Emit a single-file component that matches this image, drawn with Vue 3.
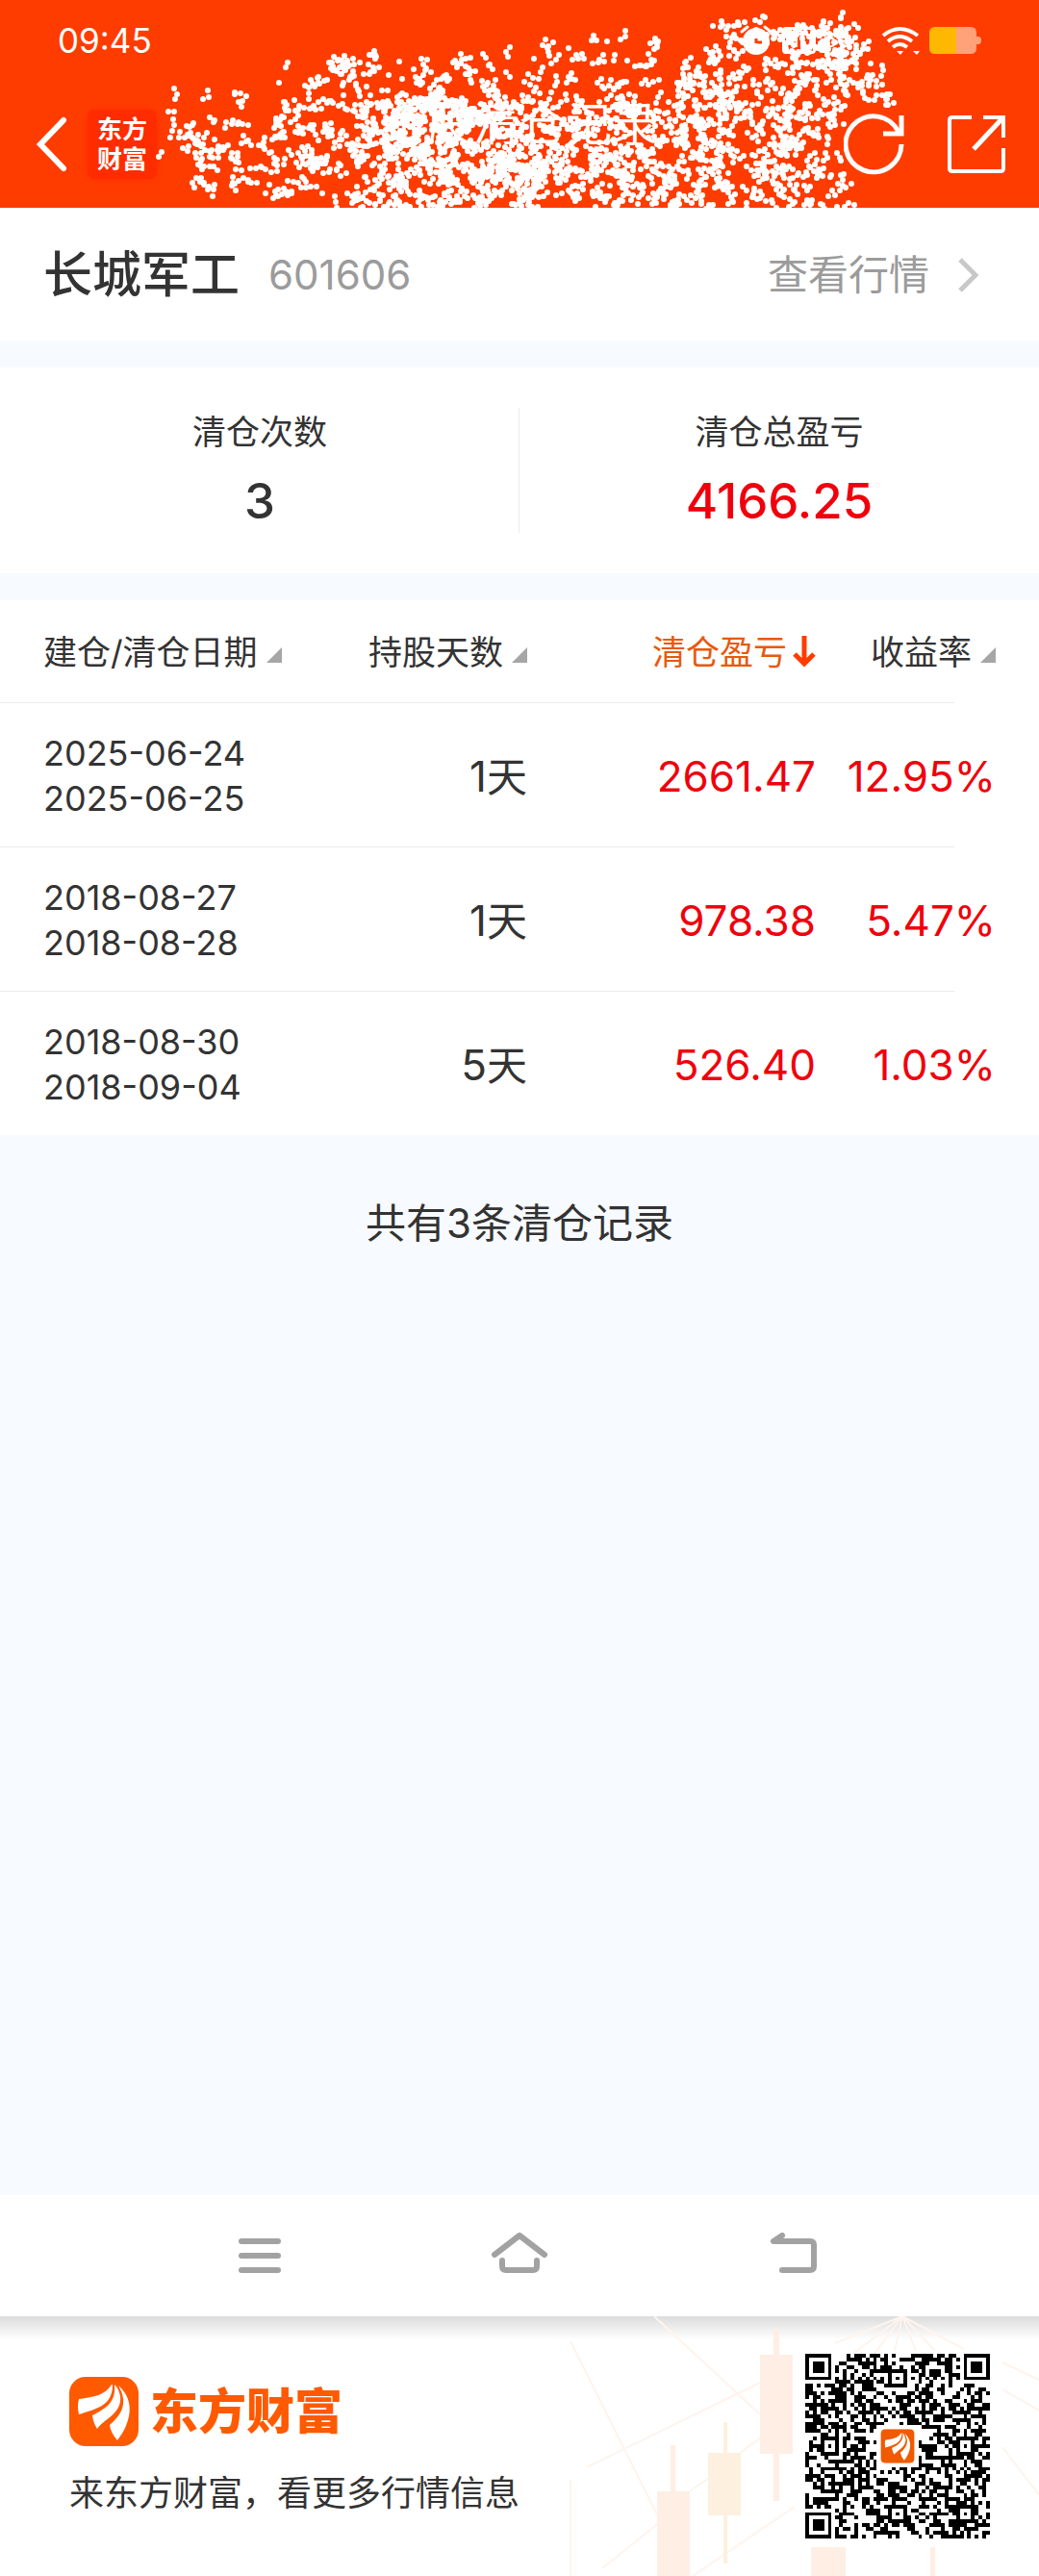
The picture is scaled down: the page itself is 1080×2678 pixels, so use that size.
<script setup>
import { ref, computed } from 'vue'

const stock = { name: '长城军工', code: '601606' }

const columns = [
  { key: 'date', label: '建仓/清仓日期' },
  { key: 'days', label: '持股天数' },
  { key: 'profit', label: '清仓盈亏' },
  { key: 'rate', label: '收益率' }
]

const records = [
  { open: '2025-06-24', close: '2025-06-25', days: 1, profit: '2661.47', rate: '12.95' },
  { open: '2018-08-27', close: '2018-08-28', days: 1, profit: '978.38', rate: '5.47' },
  { open: '2018-08-30', close: '2018-09-04', days: 5, profit: '526.40', rate: '1.03' }
]

const sortKey = ref('profit')

const sortedRecords = computed(() => {
  const value = (r) => sortKey.value === 'date' ? Date.parse(r.close) : Number(r[sortKey.value])
  return [...records].sort((a, b) => value(b) - value(a))
})

function createRandom(seed) {
  let s = seed
  return () => {
    s = (s * 1664525 + 1013904223) % 4294967296
    return s / 4294967296
  }
}

// spray over the title: [left, top, right, bottom, dots]
const sprayAreas = [
  [165, 90, 225, 190, 36],
  [190, 138, 290, 205, 105],
  [225, 95, 290, 140, 18],
  [290, 70, 380, 205, 165],
  [310, 120, 350, 180, 30],
  [340, 55, 540, 110, 160],
  [370, 105, 475, 216, 380],
  [400, 105, 470, 165, 150],
  [475, 105, 545, 216, 300],
  [500, 165, 560, 200, 60],
  [540, 100, 700, 216, 520],
  [545, 40, 700, 100, 90],
  [700, 60, 880, 130, 300],
  [690, 110, 865, 216, 430],
  [735, 16, 885, 60, 90],
  [815, 28, 845, 56, 50],
  [850, 28, 900, 58, 45],
  [870, 50, 925, 110, 60],
  [865, 115, 885, 216, 18]
]

function buildSpray() {
  const random = createRandom(77)
  let d = ''
  for (const [x0, y0, x1, y1, count] of sprayAreas) {
    let left = count
    while (left > 0) {
      let x = x0 + random() * (x1 - x0)
      let y = y0 + random() * (y1 - y0)
      let run = 1 + Math.floor(random() * 3)
      while (run-- > 0 && left-- > 0) {
        d += `M${Math.round(x)} ${Math.round(y)}h0`
        const angle = random() * Math.PI * 2
        x += Math.cos(angle) * 6
        y += Math.sin(angle) * 6
      }
    }
  }
  return d
}

const sprayPath = buildSpray()

const qrSize = 49

function buildQr() {
  const random = createRandom(2025)
  const grid = Array.from({ length: qrSize }, () =>
    Array.from({ length: qrSize }, () => random() < 0.51)
  )
  const last = qrSize - 7

  // timing rows
  for (let i = 8; i < qrSize - 8; i++) {
    grid[6][i] = i % 2 === 0
    grid[i][6] = i % 2 === 0
  }
  // finder marks with their quiet border
  for (const [cx, cy] of [[3, 3], [last + 3, 3], [3, last + 3]]) {
    for (let y = cy - 4; y <= cy + 4; y++) {
      for (let x = cx - 4; x <= cx + 4; x++) {
        if (x < 0 || y < 0 || x >= qrSize || y >= qrSize) continue
        const ring = Math.max(Math.abs(x - cx), Math.abs(y - cy))
        grid[y][x] = ring !== 4 && ring !== 2
      }
    }
  }
  // alignment marks
  for (const [cx, cy] of [[24, 6], [6, 24], [42, 24], [24, 42], [42, 42]]) {
    for (let y = cy - 2; y <= cy + 2; y++) {
      for (let x = cx - 2; x <= cx + 2; x++) {
        grid[y][x] = Math.max(Math.abs(x - cx), Math.abs(y - cy)) !== 1
      }
    }
  }
  // room for the logo
  for (let y = 19; y < 30; y++) {
    for (let x = 19; x < 30; x++) grid[y][x] = false
  }

  let d = ''
  grid.forEach((row, y) => row.forEach((on, x) => {
    if (on) d += `M${x} ${y}h1v1h-1z`
  }))
  return d
}

const qrPath = buildQr()
</script>

<template>
  <div class="page">
    <header class="header">
      <div class="status-bar">
        <span class="time">09:45</span>
        <div class="status-icons">
          <svg width="34" height="34" viewBox="0 0 34 34" fill="none">
            <circle cx="17" cy="18" r="14" fill="#fff" />
            <path d="M17 10v9h6" stroke="#ff3c00" stroke-width="3" />
            <path d="M2 8l6-5M32 8l-6-5" stroke="#fff" stroke-width="3" stroke-linecap="round" />
          </svg>
          <span class="badge">HD</span>
          <span class="network">5G</span>
          <svg width="40" height="30" viewBox="0 0 40 30" fill="none" stroke="#fff" stroke-width="4">
            <path d="M2 10Q19-4 38 10M7 16Q19 6 32 16M12 22q7-6 15 0" />
            <path d="M16 26h7l-3 4zM33 26h7l-3 4z" fill="#fff" stroke="none" />
          </svg>
          <svg width="54" height="28" viewBox="0 0 54 28">
            <path d="M28 0h15q6 0 6 6v4h2q3 0 3 4t-3 4h-2v4q0 6-6 6H28z" fill="#ffa27a" />
            <path d="M28 0H6Q0 0 0 6v16q0 6 6 6h22z" fill="#ffb800" />
          </svg>
        </div>
      </div>
      <nav class="title-bar">
        <div class="title-side">
          <button class="icon-button" type="button" aria-label="返回">
            <svg width="36" height="60" viewBox="0 0 36 60" fill="none" stroke="#fff" stroke-width="6">
              <path d="M31 5L7 30l24 25" stroke-linecap="round" />
            </svg>
          </button>
          <span class="brand">东方<br>财富</span>
        </div>
        <div class="title-text">
          <h1>个股清仓记录</h1>
          <p>***</p>
        </div>
        <div class="title-side title-actions">
          <button class="icon-button" type="button" aria-label="刷新">
            <svg width="64" height="64" viewBox="0 0 64 64" fill="none" stroke="#fff" stroke-width="5">
              <path d="M60 32A29 29 0 1 1 57 19" />
              <path d="M60 2v19H41" />
            </svg>
          </button>
          <button class="icon-button" type="button" aria-label="分享">
            <svg width="60" height="60" viewBox="0 0 60 60" fill="none" stroke="#fff" stroke-width="4">
              <path d="M25 2H5Q2 2 2 5v50q0 3 3 3h50q3 0 3-3V34" />
              <path d="M37 2h21v21" />
              <path d="M56 4L27 35" stroke-width="5" />
            </svg>
          </button>
        </div>
      </nav>
      <svg class="spray" viewBox="0 0 1080 216" preserveAspectRatio="xMidYMin slice" aria-hidden="true">
        <path :d="sprayPath" stroke="#fff" stroke-width="6" stroke-linecap="round" />
      </svg>
    </header>

    <main class="content">
      <section class="stock">
        <h2>{{ stock.name }}</h2>
        <span class="code">{{ stock.code }}</span>
        <a class="quote-link" href="#quote">
          查看行情
          <svg width="22" height="36" viewBox="0 0 22 36" fill="none" stroke="#c8c8c8" stroke-width="5">
            <path d="M2 2l16 16L2 34" />
          </svg>
        </a>
      </section>

      <section class="summary">
        <div class="summary-item">
          <span class="summary-label">清仓次数</span>
          <strong>3</strong>
        </div>
        <div class="summary-item">
          <span class="summary-label">清仓总盈亏</span>
          <strong class="up">4166.25</strong>
        </div>
      </section>

      <table class="records">
        <thead>
          <tr>
            <th v-for="column in columns" :key="column.key" :class="'col-' + column.key">
              <button class="sort" :class="{ active: sortKey === column.key }" type="button"
                @click="sortKey = column.key">
                {{ column.label }}
                <svg v-if="sortKey === column.key" width="24" height="34" viewBox="0 0 24 34" fill="none"
                  stroke="#ff3c00" stroke-width="5">
                  <path d="M12 0v30M2 19l10 10 10-10" />
                </svg>
                <svg v-else class="corner" width="16" height="16" viewBox="0 0 16 16">
                  <path d="M16 0v16H0z" fill="#a6a6a6" />
                </svg>
              </button>
            </th>
          </tr>
        </thead>
        <tbody>
          <tr v-for="record in sortedRecords" :key="record.close">
            <td class="date">{{ record.open }}<br>{{ record.close }}</td>
            <td class="number"><span class="figure">{{ record.days }}</span>天</td>
            <td class="number figure up">{{ record.profit }}</td>
            <td class="number figure up last">{{ record.rate }}%</td>
          </tr>
        </tbody>
      </table>

      <p class="total">共有{{ records.length }}条清仓记录</p>
    </main>

    <nav class="system-nav">
      <button class="icon-button" type="button" aria-label="菜单">
        <svg width="80" height="48" viewBox="0 0 80 48" stroke="#a2a2a2" stroke-width="6" stroke-linecap="round">
          <path d="M21 9h38M21 24h38M21 39h38" />
        </svg>
      </button>
      <button class="icon-button" type="button" aria-label="主页">
        <svg width="80" height="48" viewBox="0 0 80 48" fill="none" stroke="#a2a2a2" stroke-width="6"
          stroke-linecap="round" stroke-linejoin="round">
          <path d="M14 23L40 3l26 20" />
          <path d="M22 29v6q0 4 4 4h28q4 0 4-4v-6" />
        </svg>
      </button>
      <button class="icon-button" type="button" aria-label="后退">
        <svg width="80" height="48" viewBox="0 0 80 48" fill="none" stroke="#a2a2a2" stroke-width="6"
          stroke-linecap="round" stroke-linejoin="round">
          <path d="M43 3l-9 6h38q4 0 4 4v22q0 4-4 4H43" />
        </svg>
      </button>
    </nav>

    <footer class="footer">
      <svg class="candles" width="520" height="270" viewBox="0 0 520 270" fill="none" aria-hidden="true">
        <g stroke="#fef4ed" stroke-width="2">
          <path d="M120 0l110 102M50 157L230 69M157 182l20-14M209 142l22-16M33 26l90 180" />
          <path d="M66 262l60-48M160 270l106-72M482 48l38 18M482 76l38 22M482 136l38 50" />
          <path d="M378 0l-70 28M378 0l-58 44M378 0l-30 40M378 0l-8 36M378 0l14 36M378 0l34 36M378 0l64 34M33 170v100" />
        </g>
        <g fill="#ffeee4">
          <path d="M123 182h34v88h-34zM137 134h5v48h-5z" />
          <path d="M230 40h34v103h-34zM244 13h6v27h-6zM244 143h6v49h-6z" />
          <path d="M283 240h36v30h-36zM407 240h5v30h-5z" />
        </g>
        <path d="M176 142h34v65h-34zM192 110h4v32h-4zM192 207h4v50h-4z" fill="#fdf0de" />
      </svg>
      <div class="footer-text">
        <div class="logo">
          <svg width="72" height="72" viewBox="0 0 72 72">
            <rect width="72" height="72" rx="17" fill="#ff5a00" />
            <g id="feathers" fill="#fff">
              <path d="M44 8C37 19 26 21 10 23Q8 30 10 39C29 33 45 30 45 8z" />
              <path d="M47 8C49 26 38 33 24 40Q25 48 29 54C37 43 55 38 53 20Q51 11 47 8z" />
              <path d="M51 9C61 26 56 38 42 50Q43 58 50 66C62 51 71 26 51 9z" />
            </g>
          </svg>
          <span class="logo-name">东方财富</span>
        </div>
        <p class="slogan">来东方财富，看更多行情信息</p>
      </div>
      <svg class="qr" width="192" height="192" :viewBox="`0 0 ${qrSize} ${qrSize}`" role="img" aria-label="二维码">
        <rect :width="qrSize" :height="qrSize" fill="#fff" />
        <path :d="qrPath" fill="#000" shape-rendering="crispEdges" />
        <svg x="20" y="20" width="9" height="9" viewBox="0 0 72 72">
          <rect width="72" height="72" rx="10" fill="#f05a00" />
          <use href="#feathers" />
        </svg>
      </svg>
    </footer>
  </div>
</template>

<style>
body {
  background: #f7fbff;
}
</style>

<style scoped>
.page {
  display: flex;
  flex-direction: column;
  min-height: 100vh;
  font-family: Inter, 'Noto Sans CJK SC', sans-serif;
  color: #333;
}

h1,
h2,
p {
  margin: 0;
  font-weight: 400;
}

button {
  border: 0;
  padding: 0;
  background: none;
  color: inherit;
  font: inherit;
  cursor: pointer;
}

svg {
  display: block;
  flex: none;
}

.up {
  color: #f0000c;
}

.header {
  position: relative;
  overflow: hidden;
  background: #ff3c00;
  color: #fff;
}

.spray {
  position: absolute;
  inset: 0;
  width: 100%;
  height: 100%;
  pointer-events: none;
}

.status-bar {
  display: flex;
  align-items: center;
  justify-content: space-between;
  height: 84px;
  padding: 0 60px;
}

.time {
  font-size: 35px;
}

.status-icons {
  display: flex;
  align-items: center;
  gap: 10px;
}

.badge {
  border: 3px solid #fff;
  border-radius: 4px;
  font-size: 20px;
  line-height: 22px;
}

.network {
  width: 48px;
  font-size: 20px;
}

.title-bar {
  display: grid;
  grid-template-columns: 1fr auto 1fr;
  align-items: center;
  height: 132px;
  padding: 0 35px;
}

.title-side {
  display: flex;
  align-items: center;
  gap: 20px;
}

.title-actions {
  justify-content: flex-end;
  gap: 44px;
}

.brand {
  padding: 5px 10px;
  border-radius: 8px;
  background: #ff2c00;
  box-shadow: 0 0 6px #ff2c00;
  font-size: 26px;
  font-weight: 700;
  line-height: 31px;
}

.title-text {
  text-align: center;
}

.title-text h1 {
  font-size: 48px;
  line-height: 60px;
}

.title-text p {
  font-size: 30px;
  line-height: 42px;
}

.content {
  flex: 1;
  background: #f7fbff;
}

.stock {
  display: flex;
  align-items: center;
  height: 136px;
  padding: 2px 62px 0 45px;
  background: #fff;
  line-height: 60px;
}

.stock h2 {
  font-size: 51px;
  font-weight: 500;
}

.code {
  margin-left: 30px;
  color: #9b9b9b;
  font-size: 42px;
}

.quote-link {
  display: flex;
  align-items: center;
  gap: 30px;
  margin-left: auto;
  color: #9b9b9b;
  font-size: 42px;
  text-decoration: none;
}

.summary {
  display: flex;
  margin: 28px 0;
  padding: 42px 0;
  background: #fff;
}

.summary-item {
  display: flex;
  flex: 1;
  flex-direction: column;
  align-items: center;
  height: 130px;
}

.summary-item + .summary-item {
  box-shadow: -1px 0 #ececec;
}

.summary-label {
  font-size: 35px;
  line-height: 50px;
}

.summary strong {
  font-size: 51px;
  font-weight: 500;
  line-height: 94px;
}

.records {
  width: 100%;
  border-collapse: collapse;
  table-layout: fixed;
  background: #fff;
}

.records th {
  height: 104px;
  padding: 2px 0 0;
  font-weight: 400;
  text-align: right;
}

.records .col-date {
  padding-left: 45px;
  text-align: left;
}

.records .col-days {
  width: 249px;
}

.records .col-profit {
  width: 300px;
}

.records .col-rate {
  width: 187px;
  padding-right: 45px;
}

.sort {
  display: inline-flex;
  align-items: center;
  gap: 9px;
  font-size: 35px;
  line-height: 50px;
  white-space: nowrap;
}

.sort.active {
  gap: 6px;
  color: #e8590c;
}

.corner {
  margin-top: 6px;
}

.records tbody tr {
  background: linear-gradient(#ececec, #ececec) 0 0 / calc(100% - 88px) 1px no-repeat;
}

.records td {
  height: 146px;
  padding: 4px 0 0;
}

.records .date {
  padding-left: 45px;
  font-size: 36px;
  line-height: 47px;
}

.number {
  font-size: 42px;
  line-height: 60px;
  text-align: right;
}

.figure {
  font-size: 44px;
}

.records .last {
  padding-right: 45px;
}

.total {
  padding: 62px 0;
  font-size: 42px;
  line-height: 60px;
  text-align: center;
}

.system-nav {
  display: grid;
  grid-template-columns: repeat(3, 1fr);
  justify-items: center;
  align-items: center;
  height: 126px;
  padding: 0 135px;
  background: #fff;
}

.footer {
  position: relative;
  display: flex;
  align-items: center;
  justify-content: space-between;
  height: 270px;
  padding: 0 51px 0 72px;
  background: linear-gradient(#dcdcdc, #fff 24px);
}

.candles {
  position: absolute;
  top: 0;
  right: 0;
}

.footer-text {
  position: relative;
  padding-top: 4px;
}

.logo {
  display: flex;
  align-items: center;
  gap: 12px;
}

.logo-name {
  color: #ff5a00;
  font-size: 50px;
  font-weight: 900;
  line-height: 74px;
}

.slogan {
  margin-top: 20px;
  font-size: 36px;
  line-height: 56px;
}

.qr {
  position: relative;
}
</style>
